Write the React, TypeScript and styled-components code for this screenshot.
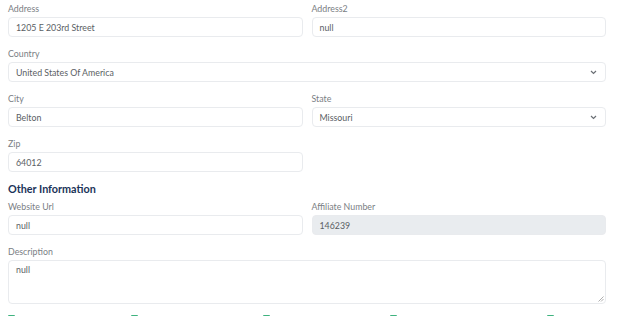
import React from 'react'
import styled, { createGlobalStyle } from 'styled-components'

const GlobalStyle = createGlobalStyle`
  html, body {
    margin: 0;
    padding: 0;
    background: #fff;
    overflow: hidden;
  }
  body {
    font-family: 'Lato', 'Open Sans', sans-serif;
  }
`

const Form = styled.div`
  width: 624px;
  height: 316px;
  box-sizing: border-box;
  padding: 2px 18px 0 8px;
  overflow: hidden;
`

const Row = styled.div`
  display: grid;
  grid-template-columns: 1fr 1fr;
  column-gap: 9px;
`

const Group = styled.div<{ $full?: boolean }>`
  grid-column: ${(p) => (p.$full ? '1 / -1' : 'auto')};
  margin-bottom: 10px;
`

const Label = styled.label`
  display: block;
  font-size: 8.8px;
  line-height: 13px;
  color: #7a7e84;
  margin-bottom: 2px;
`

const Field = styled.div<{ $disabled?: boolean }>`
  position: relative;
  box-sizing: border-box;
  height: 20px;
  border: 1px solid #e9ebee;
  border-radius: 4px;
  background: ${(p) => (p.$disabled ? '#e9ecef' : '#fff')};
  padding: 0 7px;
  display: flex;
  align-items: center;
  font-size: 8.8px;
  color: #5a5e64;
`

const Chevron = styled.svg`
  position: absolute;
  right: 8px;
  top: 7px;
`

const TextArea = styled.div`
  position: relative;
  box-sizing: border-box;
  height: 44px;
  border: 1px solid #e9ebee;
  border-radius: 4px;
  padding: 3px 7px;
  font-size: 8.8px;
  color: #5a5e64;
`

const Grip = styled.svg`
  position: absolute;
  right: 1px;
  bottom: 1px;
`

const Heading = styled.h3`
  margin: 0 0 4px;
  font-size: 10.8px;
  line-height: 14px;
  font-weight: 700;
  color: #1b3358;
`

const Checks = styled.div`
  display: flex;
  align-items: flex-start;
`

const Check = styled.div<{ $w: number }>`
  width: ${(p) => p.$w}px;
  display: flex;
  align-items: flex-start;
  gap: 7px;
  font-size: 8.8px;
  line-height: 12px;
  color: #7a7e84;
`

const Box = styled.span`
  flex: none;
  margin-top: 1px;
  width: 7px;
  height: 7px;
  border-radius: 1px;
  background: #3fb37f;
`

const ChevronIcon = () => (
  <Chevron width="7" height="5" viewBox="0 0 7 5">
    <polyline points="1,1 3.5,3.5 6,1" fill="none" stroke="#6b6f75" strokeWidth="1.2" />
  </Chevron>
)

const Input = ({ value, select, disabled }: { value: string; select?: boolean; disabled?: boolean }) => (
  <Field $disabled={disabled}>
    {value}
    {select && <ChevronIcon />}
  </Field>
)

const checks = [
  { w: 124, label: 'Is Active' },
  { w: 134, label: 'Is Affiliate Active' },
  { w: 128, label: 'Show On Website' },
  { w: 158, label: 'Is Featured Affiliate' },
  { w: 60, label: 'Is Verified' },
]

export default function App() {
  return (
    <>
      <GlobalStyle />
      <Form>
        <Row>
          <Group>
            <Label>Address</Label>
            <Input value="1205 E 203rd Street" />
          </Group>
          <Group>
            <Label>Address2</Label>
            <Input value="null" />
          </Group>
          <Group $full>
            <Label>Country</Label>
            <Input value="United States Of America" select />
          </Group>
          <Group>
            <Label>City</Label>
            <Input value="Belton" />
          </Group>
          <Group>
            <Label>State</Label>
            <Input value="Missouri" select />
          </Group>
          <Group>
            <Label>Zip</Label>
            <Input value="64012" />
          </Group>
        </Row>
        <Heading>Other Information</Heading>
        <Row>
          <Group>
            <Label>Website Url</Label>
            <Input value="null" />
          </Group>
          <Group>
            <Label>Affiliate Number</Label>
            <Input value="146239" disabled />
          </Group>
          <Group $full>
            <Label>Description</Label>
            <TextArea>
              null
              <Grip width="6" height="6" viewBox="0 0 6 6">
                <line x1="0.5" y1="5.5" x2="5.5" y2="0.5" stroke="#9a9a9a" strokeWidth="0.8" />
                <line x1="3" y1="5.5" x2="5.5" y2="3" stroke="#9a9a9a" strokeWidth="0.8" />
              </Grip>
            </TextArea>
          </Group>
        </Row>
        <Checks>
          {checks.map((c) => (
            <Check key={c.label} $w={c.w}>
              <Box />
              {c.label}
            </Check>
          ))}
        </Checks>
      </Form>
    </>
  )
}
